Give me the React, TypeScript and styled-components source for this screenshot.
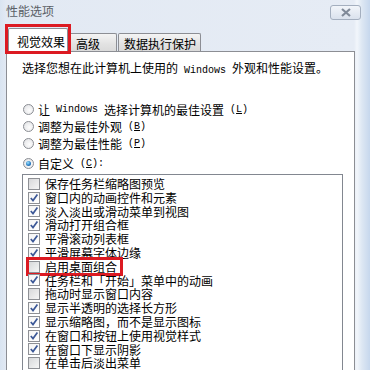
import React from "react";
import styled, { createGlobalStyle } from "styled-components";

const Global = createGlobalStyle`
  html, body { margin: 0; padding: 0; }
  body {
    width: 370px; height: 370px; overflow: hidden;
    font-family: "Noto Sans CJK SC", "Noto Sans", sans-serif;
    font-size: 12px; color: #000;
  }
`;

const Window = styled.div`
  width: 370px; height: 370px; overflow: hidden;
  display: flex; flex-direction: column;
  background:
    linear-gradient(90deg, #d9e4f1 0px, #e2e9f3 6px, #e6ecf5 354px, #f2f6fb 357px, #dde7f3 362px, #c6d7ed 370px);
`;

const TitleBar = styled.div`
  height: 23px; flex: none;
  display: flex; align-items: center; justify-content: space-between;
  padding: 0 9px 0 6px;
`;

const Title = styled.span`
  color: #5a5f66; font-size: 12px; line-height: 12px; margin-top: -1px;
`;

const CloseBtn = styled.div`
  width: 29px; height: 13px; margin-top: 2px;
  border: 1px solid #a4afbf; border-radius: 3px;
  background: linear-gradient(#f2f5fa, #dae2ed);
  display: flex; align-items: center; justify-content: center;
`;

const TabStrip = styled.div`
  height: 28px; flex: none;
  display: flex; align-items: flex-end;
  padding-left: 8px;
  position: relative; z-index: 2;
`;

const Tab = styled.div<{ $active?: boolean; $w: number; $pl: number }>`
  position: relative;
  box-sizing: border-box;
  width: ${(p) => p.$w}px;
  height: ${(p) => (p.$active ? 24 : 18)}px;
  margin-bottom: ${(p) => (p.$active ? -1 : 0)}px;
  margin-left: ${(p) => (p.$active ? 0 : 1)}px;
  padding-left: ${(p) => p.$pl}px;
  border: 1px solid #8c8e94;
  border-bottom: ${(p) => (p.$active ? "none" : "0")};
  border-radius: 2px 2px 0 0;
  background: ${(p) => (p.$active ? "#fff" : "linear-gradient(#f4f4f4, #e2e2e2 60%, #dadada)")};
  display: flex; align-items: center;
  line-height: 12px; font-size: 12px;
  z-index: ${(p) => (p.$active ? 2 : 1)};
  padding-top: ${(p) => (p.$active ? 3 : 2)}px;
`;

const Highlight = styled.div<{ $t: number; $l: number; $w: number; $h: number }>`
  position: absolute;
  top: ${(p) => p.$t}px; left: ${(p) => p.$l}px;
  width: ${(p) => p.$w}px; height: ${(p) => p.$h}px;
  box-sizing: border-box;
  border: 3px solid #dc1a22;
  pointer-events: none;
`;

const Panel = styled.div`
  flex: 1;
  margin-left: 6px;
  width: 349px;
  box-sizing: border-box;
  background: #fff;
  border: 1px solid #8c8e94;
  border-bottom: none;
  padding: 9px 0 0 15px;
  display: flex; flex-direction: column;
`;

const Heading = styled.div`
  line-height: 14px; height: 14px; white-space: pre;
`;

const Lat = styled.span`
  font-family: "Liberation Mono", monospace;
  font-size: 10px;
  white-space: pre;
`;

const RadioGroup = styled.div`
  margin-top: 26px;
  display: flex; flex-direction: column;
`;

const RadioRow = styled.div<{ $gap?: number }>`
  height: 17px;
  margin-top: ${(p) => p.$gap ?? 0}px;
  display: flex; align-items: center;
  padding-left: 1px;
  white-space: pre; line-height: 14px;
`;

const Radio = styled.span<{ $on?: boolean }>`
  width: 11px; height: 11px; flex: none;
  box-sizing: border-box;
  border-radius: 50%;
  border: 1px solid #8a8d93;
  background: radial-gradient(circle at 60% 60%, #fdfdfd, #dedfe2);
  margin-right: 4px;
  display: flex; align-items: center; justify-content: center;
  &::after {
    content: "";
    display: ${(p) => (p.$on ? "block" : "none")};
    width: 5px; height: 5px; border-radius: 50%;
    background: radial-gradient(circle at 40% 35%, #9fe4ff, #2a7fc6 55%, #174d8a);
  }
`;

const ListBox = styled.div`
  margin-top: 2px;
  width: 321px;
  flex: 1;
  box-sizing: border-box;
  border: 1px solid #828790;
  border-bottom: none;
  padding: 2px 0 0 5px;
  display: flex; flex-direction: column;
  overflow: hidden;
`;

const ItemRow = styled.div`
  position: relative;
  height: 13.8px; flex: none;
  display: flex; align-items: center;
  white-space: nowrap; line-height: 13.8px;
`;

const Box = styled.span<{ $on?: boolean }>`
  width: 12px; height: 12px; flex: none;
  box-sizing: border-box;
  border: 1px solid #8e9095;
  background: ${(p) => (p.$on ? "linear-gradient(135deg, #f4f4f4, #ffffff)" : "linear-gradient(135deg, #d7d8da, #f6f6f6)")};
  margin-right: 5px;
  display: flex; align-items: center; justify-content: center;
`;

const Check = () => (
  <svg width="10" height="10" viewBox="0 0 10 10">
    <path d="M1.8 5 L4 7.6 L8.4 1.6" fill="none" stroke="#3c5897" strokeWidth="1.7" />
  </svg>
);

const items: [string, boolean][] = [
  ["保存任务栏缩略图预览", false],
  ["窗口内的动画控件和元素", true],
  ["淡入淡出或滑动菜单到视图", true],
  ["滑动打开组合框", true],
  ["平滑滚动列表框", true],
  ["平滑屏幕字体边缘", true],
  ["启用桌面组合", false],
  ["任务栏和「开始」菜单中的动画", true],
  ["拖动时显示窗口内容", false],
  ["显示半透明的选择长方形", true],
  ["显示缩略图，而不是显示图标", true],
  ["在窗口和按钮上使用视觉样式", true],
  ["在窗口下显示阴影", true],
  ["在单击后淡出菜单", false],
];

export default function App() {
  return (
    <>
      <Global />
      <Window>
        <TitleBar>
          <Title>性能选项</Title>
          <CloseBtn>
            <svg width="12" height="9" viewBox="0 0 12 9">
              <path d="M2 1 L10 8 M10 1 L2 8" stroke="#808a99" strokeWidth="2.2" fill="none" />
            </svg>
          </CloseBtn>
        </TitleBar>
        <TabStrip>
          <Tab $active $w={60} $pl={8}>
            视觉效果
            <Highlight $t={-5} $l={-4} $w={66} $h={30} />
          </Tab>
          <Tab $w={48} $pl={6}>高级</Tab>
          <Tab $w={83} $pl={5}>数据执行保护</Tab>
        </TabStrip>
        <Panel>
          <Heading>
            选择您想在此计算机上使用的<Lat> Windows </Lat>外观和性能设置。
          </Heading>
          <RadioGroup>
            <RadioRow>
              <Radio />
              让<Lat> Windows </Lat>选择计算机的最佳设置<Lat> (<u>L</u>)</Lat>
            </RadioRow>
            <RadioRow>
              <Radio />
              调整为最佳外观<Lat> (<u>B</u>)</Lat>
            </RadioRow>
            <RadioRow>
              <Radio />
              调整为最佳性能<Lat> (<u>P</u>)</Lat>
            </RadioRow>
            <RadioRow $gap={3}>
              <Radio $on />
              自定义<Lat> (<u>C</u>):</Lat>
            </RadioRow>
          </RadioGroup>
          <ListBox>
            {items.map(([label, on], i) => (
              <ItemRow key={label}>
                <Box $on={on}>{on && <Check />}</Box>
                {label}
                {i === 6 && <Highlight $t={-3} $l={-2} $w={97} $h={19} />}
              </ItemRow>
            ))}
          </ListBox>
        </Panel>
      </Window>
    </>
  );
}
